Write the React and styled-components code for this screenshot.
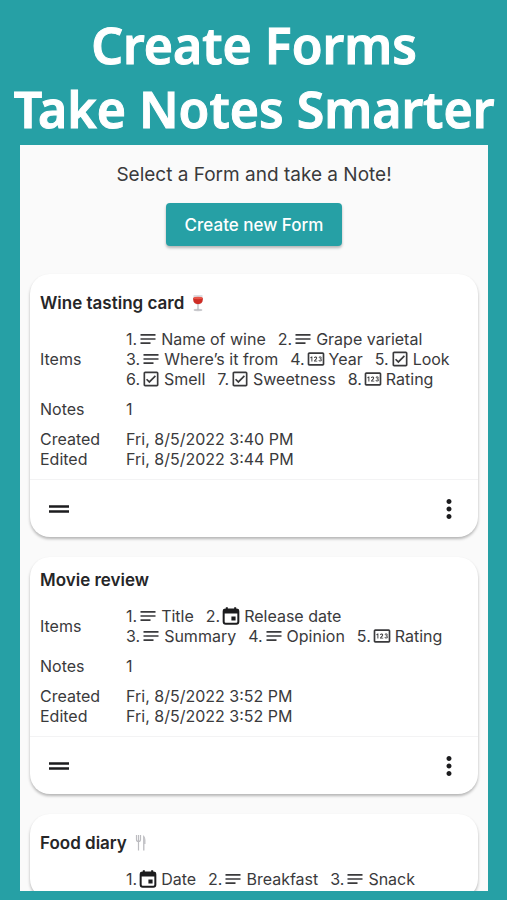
import React from "react";
import styled, { createGlobalStyle } from "styled-components";
import {
  MdNotes,
  MdOutlineCheckBox,
  MdOutlinePin,
  MdDragHandle,
  MdMoreVert,
} from "react-icons/md";

const GlobalStyle = createGlobalStyle`
  * {
    box-sizing: border-box;
  }

  body {
    margin: 0;
    font-family: Inter, "Liberation Sans", sans-serif;
    color: #3a3a3c;
  }
`;

const Page = styled.div`
  display: flex;
  flex-direction: column;
  height: 100vh;
  padding: 13px 19px 9px 20px;
  background-color: #26a0a5;
`;

const Headline = styled.h1`
  margin: 0 -20px 4px;
  font-family: "Noto Sans", sans-serif;
  font-size: 50px;
  font-weight: 600;
  line-height: 64px;
  text-align: center;
  white-space: nowrap;
  color: #fff;
  -webkit-text-stroke: 1px #fff;
`;

const Panel = styled.main`
  flex: 1;
  min-height: 0;
  overflow: hidden;
  padding: 18px 10px 0;
  background-color: #fafafa;
`;

const Intro = styled.div`
  display: flex;
  flex-direction: column;
  align-items: center;
  gap: 16px;
  margin-bottom: 28px;
`;

const IntroText = styled.p`
  margin: 0;
  font-size: 19px;
  line-height: 24px;
`;

const CreateButton = styled.button`
  height: 43px;
  padding: 0 19px;
  border: none;
  border-radius: 4px;
  background-color: #26a0a5;
  box-shadow: 0 2px 3px rgba(0, 0, 0, 0.28);
  color: #fff;
  font-family: inherit;
  font-size: 17px;
  font-weight: 500;
`;

const CardList = styled.div`
  display: flex;
  flex-direction: column;
  gap: 20px;
`;

const Card = styled.article`
  border-radius: 20px;
  background-color: #fff;
  box-shadow: 0 2px 3px rgba(0, 0, 0, 0.28);
`;

const CardBody = styled.div`
  padding: 13px 20px 10px 10px;
`;

const CardTitle = styled.h2`
  display: flex;
  align-items: flex-end;
  gap: 7px;
  min-height: ${(props) => (props.$tall ? "26px" : "20px")};
  margin: 0 0 16px;
  font-size: 17px;
  font-weight: 600;
  line-height: 20px;
  color: #262628;
`;

const Details = styled.dl`
  display: grid;
  grid-template-columns: 86px 1fr;
  align-items: center;
  margin: 0;
  font-size: 16px;
  line-height: 20px;
`;

const Label = styled.dt`
  margin-top: ${(props) => (props.$spaced ? "10px" : "0")};
`;

const Value = styled.dd`
  margin: ${(props) => (props.$spaced ? "10px 0 0" : "0")};
`;

const ItemList = styled.ol`
  display: flex;
  flex-wrap: wrap;
  column-gap: 12px;
  margin: 0;
  padding: 0;
  list-style: none;
`;

const Item = styled.li`
  display: flex;
  align-items: center;
  white-space: nowrap;

  svg {
    width: 20px;
    height: 20px;
    margin: 0 3px 0 1px;
  }
`;

const CardFooter = styled.footer`
  display: flex;
  align-items: center;
  justify-content: space-between;
  height: 58px;
  padding: 0 14px;
  border-top: 1px solid #f3f3f4;
`;

const IconButton = styled.button`
  display: flex;
  padding: 0;
  border: none;
  background: none;
  color: #1c1c1e;

  svg {
    width: 30px;
    height: 30px;
  }
`;

function DateIcon(props) {
  return (
    <svg viewBox="0 0 24 24" {...props}>
      <path
        d="M7 1.500v4M17 1.500v4"
        stroke="#1c1c1e"
        strokeWidth="2.400"
      />
      <rect
        x="3.200"
        y="4.200"
        width="17.600"
        height="17"
        rx="2.400"
        fill="none"
        stroke="#1c1c1e"
        strokeWidth="2.400"
      />
      <path d="M3 4h18v5H3zM12.500 12.500h5v5h-5z" fill="#1c1c1e" />
    </svg>
  );
}

const icons = {
  text: MdNotes,
  date: DateIcon,
  check: MdOutlineCheckBox,
  number: MdOutlinePin,
};

function WineGlass() {
  return (
    <svg width="20" height="20" viewBox="0 0 20 20" aria-hidden="true">
      <ellipse cx="7" cy="17" rx="4.4" ry="1.2" fill="#c9c9cd" />
      <path d="M6.4 11h1.2v6H6.4z" fill="#b9b9be" />
      <path d="M2.6 2h8.8l.4 4.5c0 3-2 5-4.8 5s-4.8-2-4.8-5z" fill="#dedee2" />
      <path d="M2.2 5h9.6v1.5c0 2.8-2 4.7-4.8 4.7S2.2 9.3 2.2 6.5z" fill="#cf2d25" />
      <ellipse cx="7" cy="5" rx="4.7" ry="1.2" fill="#e8574a" />
    </svg>
  );
}

function Cutlery() {
  return (
    <svg width="20" height="20" viewBox="0 0 20 20" aria-hidden="true">
      <path
        d="M2.5 2v4.5q0 2 2 2t2-2V2M4.5 2v15.5"
        fill="none"
        stroke="#bcbcc0"
        strokeWidth="1.2"
      />
      <path d="M9 17.5V2q2.500 1.500 2.500 5v4h-1v6.500z" fill="#c4c4c8" />
    </svg>
  );
}

const forms = [
  {
    title: "Wine tasting card",
    emoji: <WineGlass />,
    items: [
      ["text", "Name of wine"],
      ["text", "Grape varietal"],
      ["text", "Where’s it from"],
      ["number", "Year"],
      ["check", "Look"],
      ["check", "Smell"],
      ["check", "Sweetness"],
      ["number", "Rating"],
    ],
    notes: 1,
    created: "Fri, 8/5/2022 3:40 PM",
    edited: "Fri, 8/5/2022 3:44 PM",
  },
  {
    title: "Movie review",
    items: [
      ["text", "Title"],
      ["date", "Release date"],
      ["text", "Summary"],
      ["text", "Opinion"],
      ["number", "Rating"],
    ],
    notes: 1,
    created: "Fri, 8/5/2022 3:52 PM",
    edited: "Fri, 8/5/2022 3:52 PM",
  },
  {
    title: "Food diary",
    emoji: <Cutlery />,
    items: [
      ["date", "Date"],
      ["text", "Breakfast"],
      ["text", "Snack"],
    ],
  },
];

function FormCard({ form }) {
  return (
    <Card>
      <CardBody>
        <CardTitle $tall={Boolean(form.emoji)}>
          {form.title}
          {form.emoji}
        </CardTitle>
        <Details>
          <Label>{form.notes && "Items"}</Label>
          <Value>
            <ItemList>
              {form.items.map(([type, name], index) => {
                const Icon = icons[type];
                return (
                  <Item key={name}>
                    {index + 1}.<Icon aria-hidden="true" />
                    {name}
                  </Item>
                );
              })}
            </ItemList>
          </Value>
          {form.notes && (
            <>
              <Label $spaced>Notes</Label>
              <Value $spaced>{form.notes}</Value>
              <Label $spaced>Created</Label>
              <Value $spaced>{form.created}</Value>
              <Label>Edited</Label>
              <Value>{form.edited}</Value>
            </>
          )}
        </Details>
      </CardBody>
      {form.notes && (
        <CardFooter>
          <IconButton aria-label="Reorder">
            <MdDragHandle />
          </IconButton>
          <IconButton aria-label="More">
            <MdMoreVert />
          </IconButton>
        </CardFooter>
      )}
    </Card>
  );
}

export default function App() {
  return (
    <>
      <GlobalStyle />
      <Page>
        <Headline>
          Create Forms
          <br />
          Take Notes Smarter
        </Headline>
        <Panel>
          <Intro>
            <IntroText>Select a Form and take a Note!</IntroText>
            <CreateButton>Create new Form</CreateButton>
          </Intro>
          <CardList>
            {forms.map((form) => (
              <FormCard key={form.title} form={form} />
            ))}
          </CardList>
        </Panel>
      </Page>
    </>
  );
}
